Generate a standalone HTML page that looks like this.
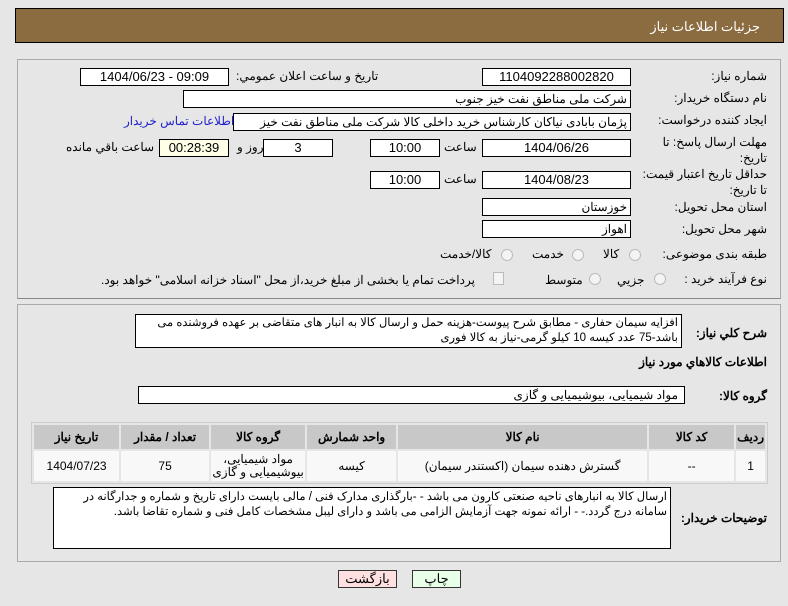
<!DOCTYPE html>
<html><head><meta charset="utf-8"><style>
body{margin:0;width:788px;height:606px;background:#e6e6e6;font-family:"Liberation Sans","Noto Sans CJK SC",sans-serif;font-size:12px;color:#000;position:relative;overflow:hidden}
.a{position:absolute;white-space:nowrap}
.b{position:absolute;background:#fff;border:1px solid #000;box-sizing:border-box;text-align:center;line-height:16px;font-size:13px}
.l{position:absolute;white-space:nowrap;direction:rtl;font-size:12px}
.r{text-align:right;direction:rtl;padding-right:3px;font-size:12px}
.rad{position:absolute;width:10px;height:10px;border:1px solid #bbb;border-radius:50%;background:#f4f4f4}
table{position:absolute;border-collapse:separate;border-spacing:2px;background:#e6e6e6;border:1px solid #ccc;direction:rtl}
th{background:#c8c8c8;height:22px;font-size:12px}
td{background:#f8f8f8;text-align:center;font-size:12px;height:26px;line-height:13px}
</style></head><body>
<div class="a" style="left:15px;top:8px;width:769px;height:35px;background:#8b6b40;border:1px solid #000;box-sizing:border-box"></div>
<div class="l" style="right:28px;top:19px;color:#fff;font-size:13px">جزئيات اطلاعات نياز</div>
<div class="a" style="left:17px;top:59px;width:764px;height:240px;border:1px solid #aaa;box-sizing:border-box;border-bottom-color:#888"></div>
<div class="a" style="left:17px;top:304px;width:764px;height:258px;border:1px solid #aaa;box-sizing:border-box"></div>

<div class="l" style="right:21px;top:69px">شماره نياز:</div>
<div class="b" style="left:482px;top:68px;width:149px;height:18px">1104092288002820</div>
<div class="l" style="left:236px;top:69px">تاريخ و ساعت اعلان عمومي:</div>
<div class="b" style="left:80px;top:68px;width:149px;height:18px">1404/06/23 - 09:09</div>

<div class="l" style="right:21px;top:91px">نام دستگاه خريدار:</div>
<div class="b r" style="left:183px;top:90px;width:448px;height:18px">شرکت ملی مناطق نفت خيز جنوب</div>

<div class="l" style="right:21px;top:113px">ايجاد کننده درخواست:</div>
<div class="b r" style="left:233px;top:113px;width:398px;height:18px;overflow:hidden">پژمان  بابادی نیاکان  کارشناس خرید داخلی کالا  شرکت ملی مناطق نفت خیز جنوب</div>
<div class="l" style="left:124px;top:114px;color:#2222cc">اطلاعات تماس خريدار</div>

<div class="l" style="right:21px;top:134px;line-height:16px;text-align:right">مهلت ارسال پاسخ: تا<br>تاريخ:</div>
<div class="b" style="left:482px;top:139px;width:149px;height:18px">1404/06/26</div>
<div class="l" style="left:444px;top:140px">ساعت</div>
<div class="b" style="left:370px;top:139px;width:70px;height:18px">10:00</div>
<div class="b" style="left:263px;top:139px;width:70px;height:18px">3</div>
<div class="l" style="left:237px;top:140px">روز و</div>
<div class="b" style="left:159px;top:139px;width:70px;height:18px;background:#ffffe8">00:28:39</div>
<div class="l" style="left:66px;top:140px">ساعت باقي مانده</div>

<div class="l" style="right:21px;top:166px;line-height:16px;text-align:right">حداقل تاريخ اعتبار قيمت:<br>تا تاريخ:</div>
<div class="b" style="left:482px;top:171px;width:149px;height:18px">1404/08/23</div>
<div class="l" style="left:444px;top:172px">ساعت</div>
<div class="b" style="left:370px;top:171px;width:70px;height:18px">10:00</div>

<div class="l" style="right:21px;top:200px">استان محل تحويل:</div>
<div class="b r" style="left:482px;top:198px;width:149px;height:18px">خوزستان</div>
<div class="l" style="right:21px;top:222px">شهر محل تحويل:</div>
<div class="b r" style="left:482px;top:220px;width:149px;height:18px">اهواز</div>

<div class="l" style="right:21px;top:247px">طبقه بندی موضوعی:</div>
<div class="rad" style="left:629px;top:249px"></div><div class="l" style="left:603px;top:247px">کالا</div>
<div class="rad" style="left:572px;top:249px"></div><div class="l" style="left:532px;top:247px">خدمت</div>
<div class="rad" style="left:501px;top:249px"></div><div class="l" style="left:440px;top:247px">کالا/خدمت</div>

<div class="l" style="right:21px;top:272px">نوع فرآيند خريد :</div>
<div class="rad" style="left:654px;top:273px"></div><div class="l" style="left:617px;top:273px">جزيي</div>
<div class="rad" style="left:589px;top:273px"></div><div class="l" style="left:545px;top:273px">متوسط</div>
<div class="a" style="left:493px;top:272px;width:9px;height:11px;border:1px solid #bbb;background:#f4f4f4"></div>
<div class="l" style="left:101px;top:273px;letter-spacing:-0.1px">پرداخت تمام يا بخشی از مبلغ خريد،از محل "اسناد خزانه اسلامی" خواهد بود.</div>

<div class="l" style="right:21px;top:326px;font-weight:bold">شرح کلي نياز:</div>
<div class="b" style="left:135px;top:314px;width:547px;height:34px;text-align:right;direction:rtl;line-height:15px;padding:1px 3px;white-space:normal;font-size:11.5px;letter-spacing:-0.2px">افزايه سيمان حفاری - مطابق شرح پيوست-هزينه حمل و ارسال کالا به انبار های  متقاضی بر عهده فروشنده می باشد-75 عدد کيسه 10 کيلو گرمی-نياز به کالا فوری</div>

<div class="l" style="right:21px;top:355px;font-weight:bold">اطلاعات کالاهاي مورد نياز</div>

<div class="l" style="right:21px;top:389px;font-weight:bold">گروه کالا:</div>
<div class="b r" style="left:138px;top:386px;width:547px;height:18px;padding-right:6px">مواد شيميايی، بيوشيميايی و  گازی</div>

<table style="left:31px;top:422px;width:737px">
<tr><th style="width:25px">رديف</th><th style="width:83px">کد کالا</th><th style="width:247px">نام کالا</th><th style="width:87px">واحد شمارش</th><th style="width:92px">گروه کالا</th><th style="width:86px">تعداد / مقدار</th><th>تاريخ نياز</th></tr>
<tr><td style="height:28px">1</td><td>--</td><td>گسترش دهنده سيمان (اکستندر سيمان)</td><td>کيسه</td><td>مواد شيميايی، بيوشيميايی و گازی</td><td>75</td><td>1404/07/23</td></tr>
</table>

<div class="l" style="right:21px;top:511px;font-weight:bold">توضيحات خريدار:</div>
<div class="b" style="left:53px;top:487px;width:618px;height:62px;text-align:right;direction:rtl;line-height:15px;padding:2px 3px;white-space:normal;font-size:11.5px;letter-spacing:-0.3px">ارسال کالا به انبارهای ناحيه صنعتی  کارون می باشد  - -بارگذاری مدارک فنی / مالی بايست دارای تاريخ و شماره و جدارگانه در سامانه درج گردد.- - ارائه نمونه جهت آزمايش الزامی می باشد و دارای ليبل مشخصات کامل فنی و شماره تقاضا باشد.</div>

<div class="b" style="left:338px;top:570px;width:59px;height:18px;background:#ffe0e0;border-color:#333">بازگشت</div>
<div class="b" style="left:412px;top:570px;width:49px;height:18px;background:#e8ffe8;border-color:#333">چاپ</div>
</body></html>
